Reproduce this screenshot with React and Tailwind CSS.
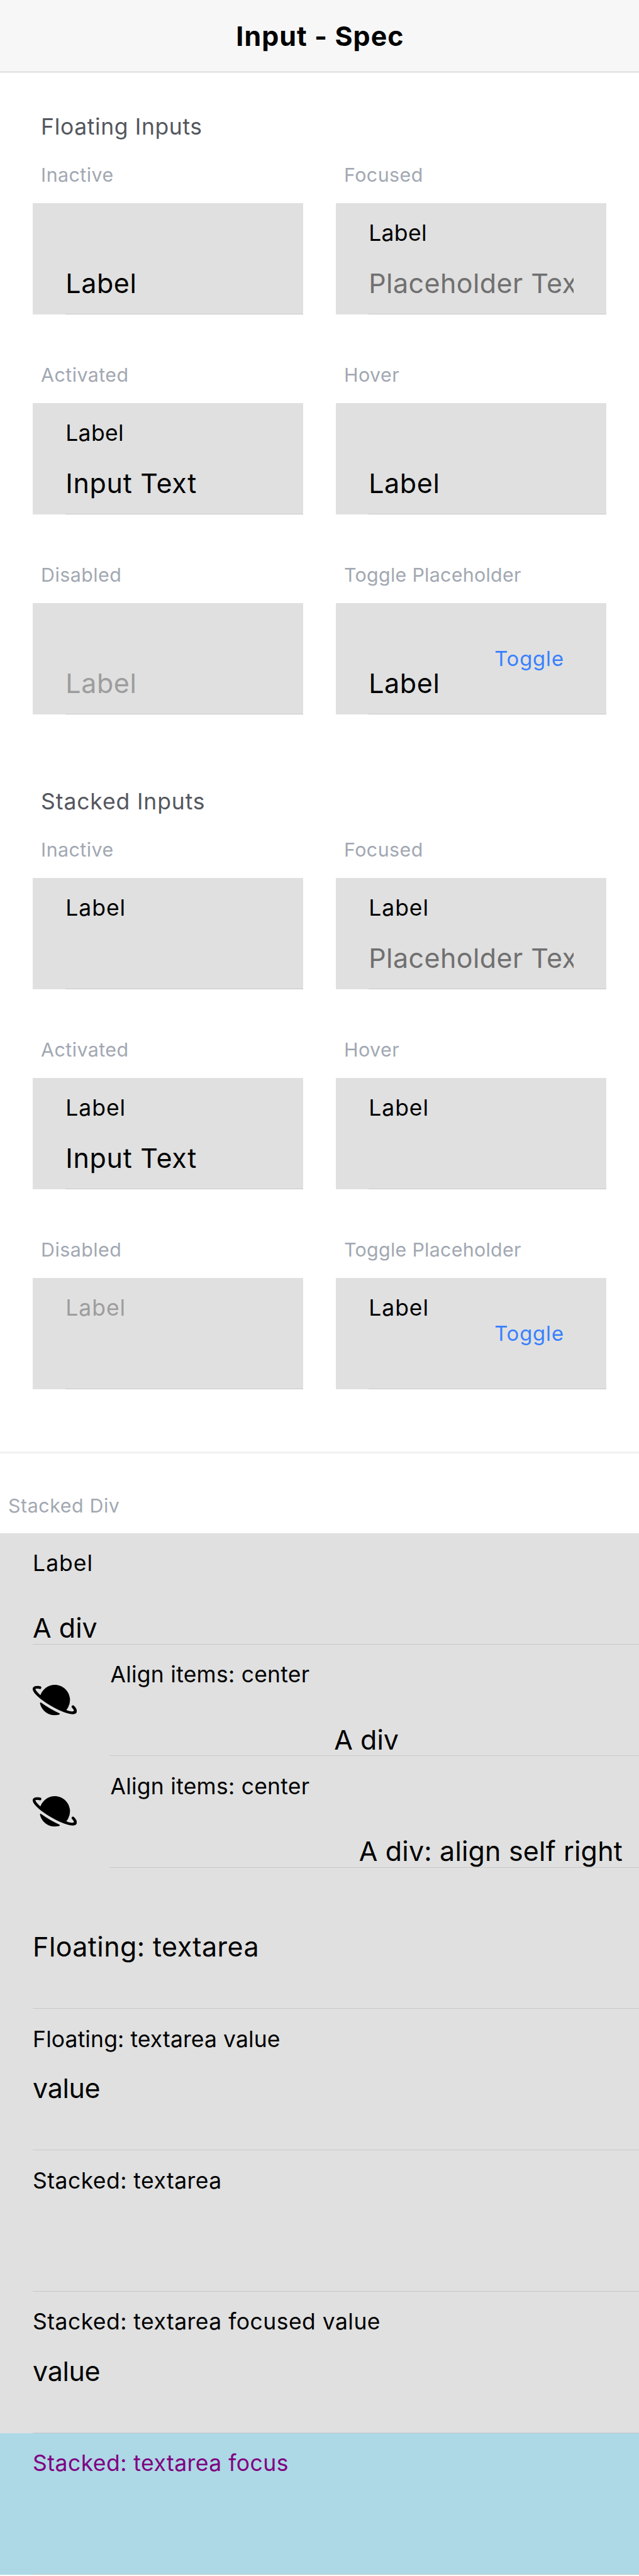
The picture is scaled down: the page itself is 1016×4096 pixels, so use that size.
import { IoPlanet } from "react-icons/io5";

const small = "h-[42px] text-[35.5px] leading-[42px] whitespace-nowrap";
const large = "h-[52px] text-[43px] leading-[52px] whitespace-nowrap";
const caption = "h-[36px] text-[30.4px] leading-[36px] whitespace-nowrap text-[#a2a8b2]";

function Heading({ children, className }) {
  return (
    <h2 className={"h-[42px] pl-[65.1px] text-[35.5px] leading-[42px] font-normal text-[#54575e] " + className}>
      {children}
    </h2>
  );
}

function Field({ title, titleClass = "tracking-[0.014em]", label, labelClass, text, textClass, disabled, toggle }) {
  return (
    <div>
      <h3 className={caption + " pl-[13px] mb-[26.9px] font-normal " + titleClass}>{title}</h3>
      <div className="h-[177.15px] bg-[#e0e0e0] pl-[52.1px]">
        <div className={"flex h-full border-b border-[#c8c8c8] " + (toggle ? "pr-[67px]" : "")}>
          <div className={"flex-1 min-w-0 pt-[26.8px] " + (disabled ? "text-[#9d9d9d]" : "text-black")}>
            <div className={small + " " + (labelClass || "")}>{label}</div>
            <div className={large + " mt-[32.3px] w-[325.6px] overflow-hidden " + (textClass || "")}>{text}</div>
          </div>
          {toggle && (
            <button className="self-center h-[40px] text-[32.8px] leading-[40px] tracking-[0.0265em] text-[#3880ff]">
              Toggle
            </button>
          )}
        </div>
      </div>
    </div>
  );
}

const bigLabel = { text: "Label", textClass: "tracking-[0.0147em]" };
const stackedLabel = { label: "Label", labelClass: "tracking-[0.028em]" };
const floatedLabel = { label: "Label", labelClass: "tracking-[0.01em]" };
const placeholder = { text: "Placeholder Text", textClass: "text-[#707070] tracking-[0.01em]" };
const inputText = { text: "Input Text", textClass: "tracking-[0.0165em]" };

function FieldGrid({ children }) {
  return <div className="mt-[37.4px] mx-[52.1px] grid grid-cols-2 gap-x-[52.1px] gap-y-[77.78px]">{children}</div>;
}

function DivItem({ icon, label, labelClass, text, textClass }) {
  return (
    <div className="flex h-[177.15px] bg-[#e0e0e0] pl-[52.1px]">
      {icon && <IoPlanet className="mt-[52.9px] mr-[53px] size-[70.3px] shrink-0 text-black" />}
      <div className="flex flex-1 flex-col border-b border-[#c8c8c8] pt-[27.2px] pr-[26px]">
        <div className={small + " " + labelClass}>{label}</div>
        <div className={large + " mt-[55.1px] " + textClass}>{text}</div>
      </div>
    </div>
  );
}

function AreaItem({ label, labelClass, text, textClass, className = "bg-[#e0e0e0] text-black" }) {
  return (
    <div className={"h-[224.91px] pl-[52.1px] " + className}>
      <div className="h-full border-b border-[#c8c8c8] pt-[27.2px]">
        <div className={small + " " + (labelClass || "")}>{label}</div>
        <div className={large + " mt-[30.2px] " + (textClass || "")}>{text}</div>
      </div>
    </div>
  );
}

export default function App() {
  return (
    <div className="h-[4096px] w-[1016px] overflow-hidden bg-white font-['Inter',sans-serif] text-black">
      <header className="h-[114.6px] border-b border-[#c5c5c5] bg-[#f7f7f7] pt-[31.3px] text-center">
        <h1 className="pl-[2px] text-[42.9px] leading-[52px] font-bold tracking-[0.025em]">Input - Spec</h1>
      </header>

      <Heading className="mt-[66.1px] tracking-[0.0175em]">Floating Inputs</Heading>
      <FieldGrid>
        <Field title="Inactive" {...bigLabel} />
        <Field title="Focused" {...floatedLabel} {...placeholder} />
        <Field title="Activated" {...floatedLabel} {...inputText} />
        <Field title="Hover" {...bigLabel} />
        <Field title="Disabled" {...bigLabel} disabled />
        <Field title="Toggle Placeholder" titleClass="tracking-[0.0093em]" {...bigLabel} toggle />
      </FieldGrid>

      <Heading className="mt-[118.2px] tracking-[0.0245em]">Stacked Inputs</Heading>
      <FieldGrid>
        <Field title="Inactive" {...stackedLabel} />
        <Field title="Focused" {...stackedLabel} {...placeholder} />
        <Field title="Activated" {...stackedLabel} {...inputText} />
        <Field title="Hover" {...stackedLabel} />
        <Field title="Disabled" {...stackedLabel} disabled />
        <Field title="Toggle Placeholder" titleClass="tracking-[0.0093em]" {...stackedLabel} toggle />
      </FieldGrid>

      <div className="mt-[99px] h-[2.6px] bg-[#f0f0f0]" />

      <h3 className={caption + " mt-[65.4px] mb-[26.2px] pl-[13px] font-normal tracking-[0.0186em]"}>Stacked Div</h3>
      <DivItem label="Label" labelClass="tracking-[0.028em]" text="A div" />
      <DivItem icon label="Align items: center" labelClass="tracking-[0.007em]" text="A div" textClass="self-center" />
      <DivItem icon label="Align items: center" labelClass="tracking-[0.007em]" text="A div: align self right" textClass="self-end tracking-[0.004em]" />
      <AreaItem text="Floating: textarea" textClass="tracking-[0.0095em]" />
      <AreaItem label="Floating: textarea value" labelClass="tracking-[0.003em]" text="value" textClass="tracking-[-0.0087em]" />
      <AreaItem label="Stacked: textarea" labelClass="tracking-[0.013em]" />
      <AreaItem label="Stacked: textarea focused value" labelClass="tracking-[0.013em]" text="value" textClass="tracking-[-0.0087em]" />
      <AreaItem label="Stacked: textarea focus" labelClass="tracking-[0.013em]" className="bg-[#add8e6] text-[#800080]" />
    </div>
  );
}
